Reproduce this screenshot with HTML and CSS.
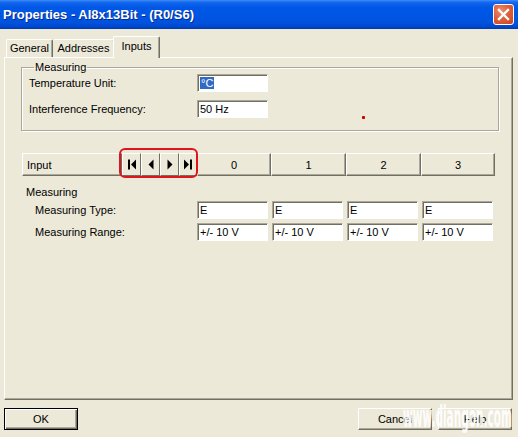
FILE: index.html
```html
<!DOCTYPE html>
<html>
<head>
<meta charset="utf-8">
<link rel="stylesheet" href="styles.css">
</head>
<body>
<div class="window">
  <div class="titlebar">
    <span class="title">Properties - AI8x13Bit - (R0/S6)</span>
    <div class="close">
      <svg width="13" height="13" viewBox="0 0 13 13"><path d="M2 2 L11 11 M11 2 L2 11" stroke="#fff" stroke-width="2.4" stroke-linecap="square"/></svg>
    </div>
  </div>
  <div class="client">
    <div class="tabs">
      <div class="tab t-general">General</div>
      <div class="tab t-addr">Addresses</div>
      <div class="tab tab-sel t-inputs">Inputs</div>
    </div>
    <div class="panel">
      <fieldset class="group">
        <legend>Measuring</legend>
        <div class="grow">
          <span class="glabel">Temperature Unit:</span>
          <div class="field"><span class="sel">°C</span></div>
        </div>
        <div class="grow grow2">
          <span class="glabel">Interference Frequency:</span>
          <div class="field">50 Hz</div>
        </div>
        <span class="dot"></span>
      </fieldset>

      <div class="header">
        <div class="hbtn hinput">Input</div>
        <div class="nav">
          <div class="nbtn"><svg width="10" height="11" viewBox="0 0 10 11"><rect x="1" y="0.5" width="2" height="10" fill="#000"/><path d="M9 0.5 L4 5.5 L9 10.5 Z" fill="#000"/></svg></div>
          <div class="nbtn"><svg width="10" height="11" viewBox="0 0 10 11"><path d="M7.5 0.5 L2.5 5.5 L7.5 10.5 Z" fill="#000"/></svg></div>
          <div class="nbtn"><svg width="10" height="11" viewBox="0 0 10 11"><path d="M2.5 0.5 L7.5 5.5 L2.5 10.5 Z" fill="#000"/></svg></div>
          <div class="nbtn nlast"><svg width="10" height="11" viewBox="0 0 10 11"><path d="M1 0.5 L6 5.5 L1 10.5 Z" fill="#000"/><rect x="7" y="0.5" width="2" height="10" fill="#000"/></svg></div>
        </div>
        <div class="hbtn hc w74">0</div>
        <div class="hbtn hc w75">1</div>
        <div class="hbtn hc w75">2</div>
        <div class="hbtn hc w74">3</div>
      </div>

      <div class="section">Measuring</div>
      <div class="prow">
        <span class="plabel">Measuring Type:</span>
        <div class="pfields">
          <div class="field">E</div>
          <div class="field">E</div>
          <div class="field">E</div>
          <div class="field">E</div>
        </div>
      </div>
      <div class="prow">
        <span class="plabel">Measuring Range:</span>
        <div class="pfields">
          <div class="field">+/- 10 V</div>
          <div class="field">+/- 10 V</div>
          <div class="field">+/- 10 V</div>
          <div class="field">+/- 10 V</div>
        </div>
      </div>
    </div>
    <div class="buttons">
      <div class="btn btn-default">OK</div>
      <div class="spacer"></div>
      <div class="btn">Cancel</div>
      <div class="btn">Help</div>
    </div>
    <svg class="watermark" width="118" height="36" viewBox="0 0 118 36"><text x="5" y="30" textLength="109" lengthAdjust="spacingAndGlyphs">www.diangon.com</text></svg>
  </div>
</div>
</body>
</html>
```
FILE: styles.css
```css
* { box-sizing: border-box; }
html, body { margin: 0; padding: 0; }
body {
  width: 518px;
  height: 437px;
  overflow: hidden;
  background: #ece9d8;
  font-family: "Liberation Sans", Arial, sans-serif;
  font-size: 11px;
  color: #000;
}
.window { width: 518px; height: 437px; display: flex; flex-direction: column; }

.titlebar {
  height: 29px;
  flex: none;
  display: flex;
  align-items: center;
  padding-left: 3px;
  padding-right: 4px;
  background: linear-gradient(180deg, #3d8ef5 0%, #1467ef 8%, #0058e6 25%, #0055e3 55%, #0052dd 80%, #0047cc 92%, #003aae 100%);
}
.title {
  flex: 1;
  color: #fff;
  font-weight: bold;
  font-size: 13px;
  text-shadow: 1px 1px 0 #0a2a8a;
}
.close {
  width: 21px;
  height: 21px;
  border: 1px solid #fff;
  border-radius: 3px;
  background: radial-gradient(circle at 35% 30%, #f08a6a 0%, #e0603c 45%, #c8431e 100%);
  display: flex;
  align-items: center;
  justify-content: center;
}

.client { flex: 1; position: relative; padding: 7px 0 0 4px; }

.tabs {
  display: flex;
  align-items: flex-end;
  height: 21px;
  padding-left: 2px;
  position: relative;
  z-index: 1;
}
.tab {
  height: 18px;
  padding-top: 2px;
  text-align: center;
  border-top: 1px solid #fff;
  border-left: 1px solid #fff;
  border-right: 1px solid #716f64;
  box-shadow: inset -1px 0 0 #aca899;
  border-radius: 2px 2px 0 0;
  background: #ece9d8;
}
.t-general { width: 47px; }
.t-addr { width: 62px; border-left: none; }
.t-inputs { width: 45px; }
.tab-sel {
  height: 22px;
  margin-bottom: -1px;
  margin-left: -2px;
  padding-top: 3px;
  width: 47px;
}

.panel {
  width: 509px;
  height: 343px;
  border-top: 1px solid #fff;
  border-left: 1px solid #fff;
  border-right: 1px solid #716f64;
  border-bottom: 1px solid #716f64;
  box-shadow: inset -1px -1px 0 #aca899;
}

.group {
  position: relative;
  margin: 3px 13px 0 16px;
  padding: 0 7px 12px 7px;
  border: 1px solid #aca899;
  box-shadow: inset 1px 1px 0 #fff, 1px 1px 0 #fff;
  min-width: 0;
}
.group legend {
  padding: 0 1px;
  margin-left: 5px;
  line-height: 13px;
}
.grow { display: flex; align-items: center; height: 18px; }
.grow2 { margin-top: 8px; }
.glabel { width: 168px; flex: none; }

.field {
  width: 71px;
  height: 18px;
  background: #fff;
  border-top: 1px solid #aca899;
  border-left: 1px solid #aca899;
  border-right: 1px solid #fff;
  border-bottom: 1px solid #fff;
  box-shadow: inset 1px 1px 0 #716f64;
  padding: 1px 0 0 2px;
  line-height: 15px;
  white-space: nowrap;
  overflow: hidden;
  flex: none;
}
.sel { background: #316ac5; color: #fff; padding: 0 1px; }

.dot {
  position: absolute;
  left: 340px;
  top: 42px;
  width: 3px;
  height: 3px;
  background: radial-gradient(circle, #d00000 50%, #f08080 100%);
}

.header {
  display: flex;
  margin: 22px 0 0 17px;
  height: 23px;
}
.hbtn {
  height: 23px;
  background: #ece9d8;
  border-top: 1px solid #fff;
  border-left: 1px solid #fff;
  border-right: 1px solid #716f64;
  border-bottom: 1px solid #716f64;
  box-shadow: inset -1px -1px 0 #aca899;
  display: flex;
  align-items: center;
}
.hinput { width: 100px; padding-left: 4px; }
.hc { justify-content: center; }
.w74 { width: 74px; }
.w75 { width: 75px; }

.nav { display: flex; position: relative; width: 75px; height: 23px; }
.nav::after {
  content: "";
  position: absolute;
  left: -3px;
  top: -5px;
  right: -1px;
  bottom: -2px;
  border: 2px solid #e0141e;
  border-radius: 6px;
}
.nbtn {
  width: 19px;
  height: 23px;
  background: #ece9d8;
  border-top: 1px solid #fff;
  border-left: 1px solid #fff;
  border-right: 1px solid #716f64;
  border-bottom: 1px solid #716f64;
  display: flex;
  align-items: center;
  justify-content: center;
}
.nlast { width: 18px; }

.section { margin: 9px 0 0 21px; line-height: 14px; }
.prow { display: flex; align-items: center; margin: 2px 0 0 30px; }
.prow + .prow { margin-top: 4px; }
.plabel { width: 162px; flex: none; }
.pfields { display: flex; gap: 4px; }

.buttons {
  display: flex;
  margin-top: 8px;
  padding-right: 6px;
  gap: 6px;
}
.spacer { flex: 1; }
.btn {
  width: 74px;
  height: 22px;
  background: #ece9d8;
  border-top: 1px solid #fff;
  border-left: 1px solid #fff;
  border-right: 1px solid #716f64;
  border-bottom: 1px solid #716f64;
  box-shadow: inset -1px -1px 0 #aca899;
  display: flex;
  align-items: center;
  justify-content: center;
}
.btn-default {
  border: 1px solid #000;
  box-shadow: inset 1px 1px 0 #fff, inset -1px -1px 0 #716f64, inset -2px -2px 0 #aca899;
}

.watermark {
  position: absolute;
  left: 398px;
  top: 368px;
}
.watermark text {
  font-family: "DejaVu Sans Condensed", "Liberation Sans", sans-serif;
  font-weight: bold;
  font-size: 30px;
  fill: rgba(255,255,255,0.92);
}
```
